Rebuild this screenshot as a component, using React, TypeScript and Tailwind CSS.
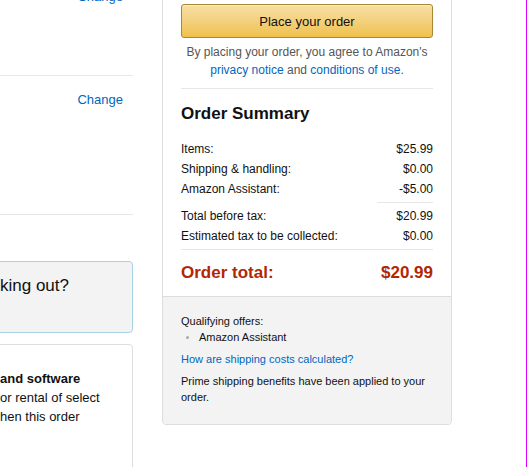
const summaryRows = [
  { label: "Items:", value: "$25.99" },
  { label: "Shipping & handling:", value: "$0.00" },
  { label: "Amazon Assistant:", value: "-$5.00" },
];

const taxRows = [
  { label: "Total before tax:", value: "$20.99" },
  { label: "Estimated tax to be collected:", value: "$0.00" },
];

function Row({ label, value }: { label: string; value: string }) {
  return (
    <div className="flex h-[20px] justify-between text-[12px] leading-[20px]">
      <span>{label}</span>
      <span>{value}</span>
    </div>
  );
}

function LeftColumn() {
  return (
    <div className="-mt-[13px] w-[133px] shrink-0">
      <div className="h-[89px] border-b border-[#e7e7e7] pr-[10px] text-right text-[13px] leading-[19px] text-[#0066c0]">
        Change
      </div>
      <div className="h-[139px] border-b border-[#e7e7e7] pr-[10px] pt-[14px] text-right text-[13px] leading-[19px] text-[#0066c0]">
        Change
      </div>
      <div className="-ml-[20px] mt-[46px] h-[72px] rounded-[4px] border border-[#a9d3e6] bg-[#f3f3f3] pl-[19px] pt-[12px] text-[17px] leading-[24px] whitespace-nowrap">
        king out?
      </div>
      <div className="-ml-[20px] mt-[11px] h-[160px] rounded-[4px] border border-[#ddd] pl-[19px] pt-[24px] text-[13px] leading-[19px] whitespace-nowrap">
        <div className="font-bold">and software</div>
        <div>or rental of select</div>
        <div>hen this order</div>
      </div>
    </div>
  );
}

function OrderPanel() {
  return (
    <div className="-mt-[10px] ml-[29px] w-[290px] shrink-0 rounded-b-[4px] border border-[#ddd] bg-white">
      <div className="px-[18px] pb-[11px] pt-[13px]">
        <button className="flex h-[34px] w-full items-center justify-center rounded-[3px] border border-[#a88734] bg-gradient-to-b from-[#f7dfa5] to-[#f0c14b] pt-px text-[13px] text-[#111] shadow-[inset_0_1px_0_rgba(255,255,255,0.4)]">
          Place your order
        </button>
        <p className="mt-[5px] text-center text-[12px] leading-[18px] text-[#555]">
          By placing your order, you agree to Amazon's{" "}
          <span className="text-[#0066c0]">privacy notice</span> and{" "}
          <span className="text-[#0066c0]">conditions of use</span>.
        </p>
        <div className="mt-[9px] h-px bg-[#e7e7e7]" />
        <h2 className="mt-[13px] text-[17px] font-bold leading-[24px]">Order Summary</h2>
        <div className="mt-[13px]">
          {summaryRows.map((r) => (
            <Row key={r.label} {...r} />
          ))}
        </div>
        <div className="mb-[3px] ml-auto mt-[3px] h-px w-[56px] bg-[#e7e7e7]" />
        {taxRows.map((r) => (
          <Row key={r.label} {...r} />
        ))}
        <div className="mt-[3px] h-px bg-[#e7e7e7]" />
        <div className="mt-[11px] flex justify-between text-[17px] font-bold leading-[24px] text-[#b12704]">
          <span>Order total:</span>
          <span>$20.99</span>
        </div>
      </div>
      <div className="rounded-b-[4px] border-t border-[#ddd] bg-[#f3f3f3] px-[18px] pb-[19px] pt-[16px] text-[11px] leading-[16px]">
        <div>Qualifying offers:</div>
        <div className="flex items-center">
          <span className="ml-[5px] mr-[10px] h-[3px] w-[3px] rounded-full bg-[#aaa]" />
          <span>Amazon Assistant</span>
        </div>
        <div className="mt-[6px] text-[#0066c0]">How are shipping costs calculated?</div>
        <p className="mt-[6px]">Prime shipping benefits have been applied to your order.</p>
      </div>
    </div>
  );
}

export default function App() {
  return (
    <div className="h-[467px] w-[527px] overflow-hidden bg-white font-['Liberation_Sans',Arial,sans-serif] text-[#111]">
      <div className="flex h-[467px] items-start">
        <LeftColumn />
        <OrderPanel />
        <div className="ml-auto h-[467px] w-px shrink-0 bg-[#dc00ff]" />
      </div>
    </div>
  );
}
